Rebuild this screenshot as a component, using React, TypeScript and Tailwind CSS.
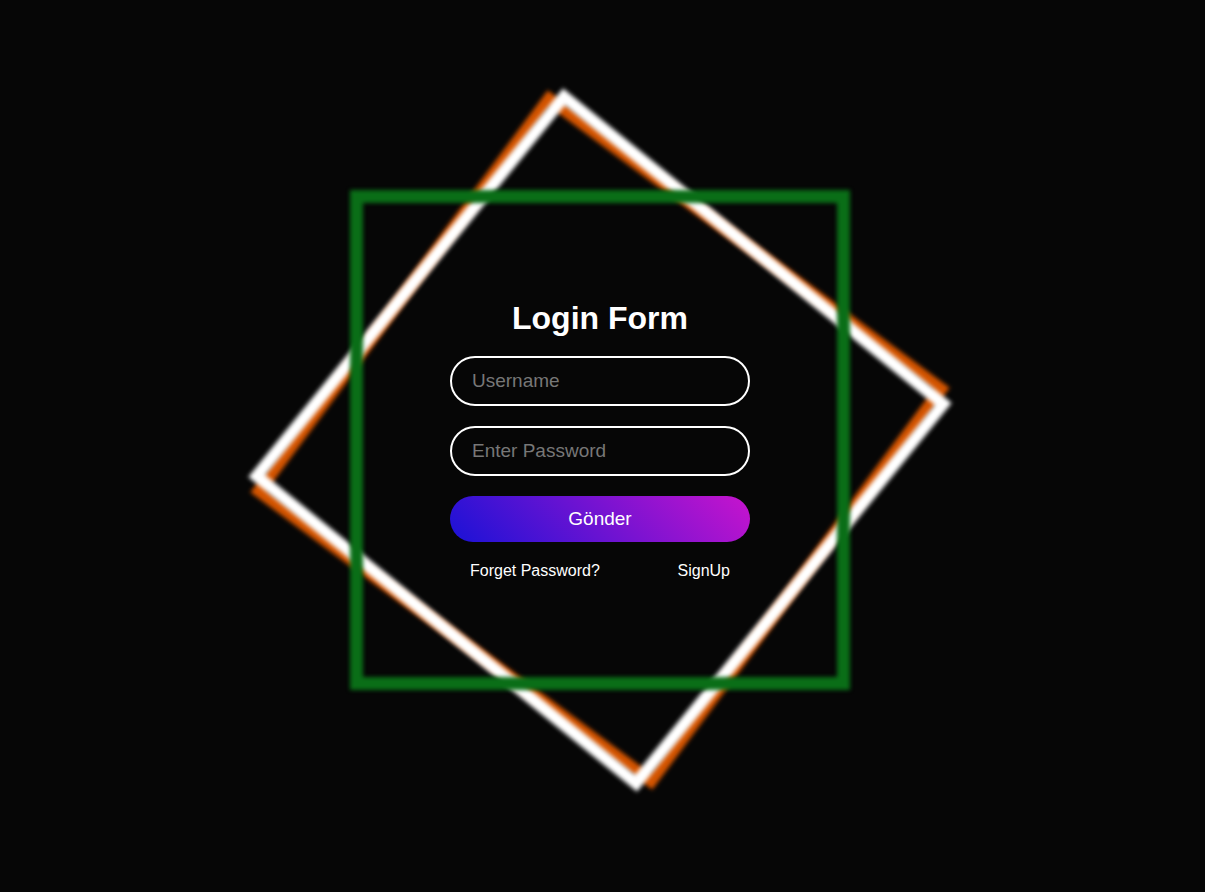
import React from 'react';

const LoginRing = () => {
  return (
    <div className="relative w-[500px] h-[500px] flex justify-center pt-[113px]">
      {/* rotating squares */}
      <i className="absolute inset-0 border-[12px] border-[#d35400] rotate-[36.5deg] blur-[2px]" />
      <i className="absolute inset-0 border-[12px] border-white rotate-[39deg] blur-[2px]" />
      <i className="absolute inset-0 border-[13px] border-[#0a6e17] blur-[2px]" />

      <form className="relative z-10 w-[300px] h-fit flex flex-col gap-5" onSubmit={e => e.preventDefault()}>
        <h2 className="mb-[3px] text-[32px] font-bold text-white text-center leading-[30px]">Login Form</h2>
        <input
          type="text"
          placeholder="Username"
          className="h-[50px] w-full rounded-full border-2 border-white bg-transparent px-5 text-[19px] text-white outline-none placeholder:text-[#777]"
        />
        <input
          type="password"
          placeholder="Enter Password"
          className="h-[50px] w-full rounded-full border-2 border-white bg-transparent px-5 text-[19px] text-white outline-none placeholder:text-[#777]"
        />
        <button
          type="submit"
          className="h-[46px] w-full rounded-full bg-[linear-gradient(45deg,#1a12d6,#c714cd)] text-[19px] text-white"
        >
          Gönder
        </button>
        <div className="flex justify-between px-5 text-[16px] leading-[18px] text-white">
          <a href="#">Forget Password?</a>
          <a href="#">SignUp</a>
        </div>
      </form>
    </div>
  );
};

export default function App() {
  return (
    <div className="min-h-screen w-full bg-[#060606] font-['Liberation_Sans',Arial,sans-serif]">
      <div className="flex justify-center pt-[190px] pr-[5px]">
        <LoginRing />
      </div>
    </div>
  );
}
